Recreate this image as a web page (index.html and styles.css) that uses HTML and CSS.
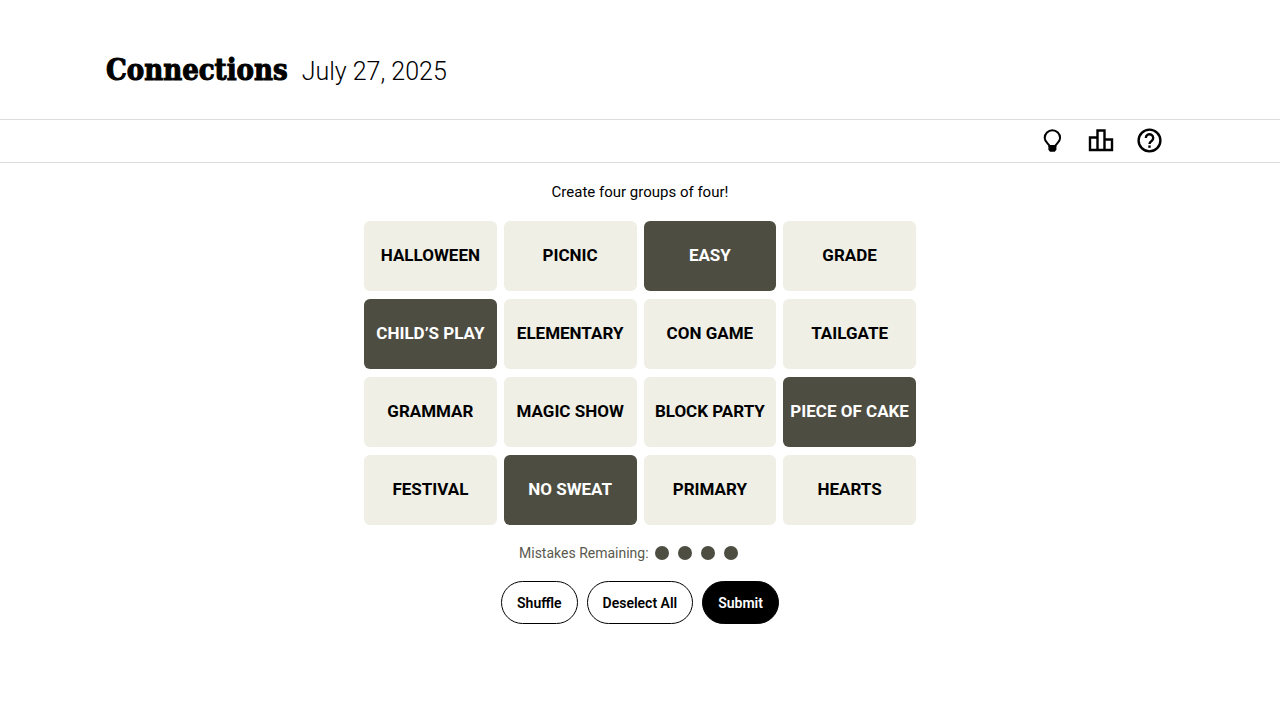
FILE: index.html
```html
<!DOCTYPE html>
<html lang="en">

<head>
    <meta charset="UTF-8">
    <meta name="viewport" content="width=device-width, initial-scale=1">
    <title>Connections</title>

    <link rel="stylesheet" href="styles.css">
</head>

<body>

    <header class="page-header">
        <div class="wrapper title-row">
            <h1>Connections</h1>
            <p class="date">July 27, 2025</p>
        </div>
    </header>

    <nav class="toolbar">
        <div class="wrapper tools">
            <button class="tool" type="button" aria-label="Hints">
                <svg width="26" height="26" viewBox="0 0 26 26">
                    <path d="M9.500 18C9.500 15.900 4.700 14.800 4.700 10a7.700 7.700 0 0 1 15.400 0c0 4.800-4.800 5.900-4.800 8z" fill="none" stroke="#000" stroke-width="2" />
                    <path d="M8.400 17.200h8v4.600l-1.600 2h-4.800l-1.600-2z" />
                </svg>
            </button>
            <button class="tool" type="button" aria-label="Statistics">
                <svg width="26" height="26" viewBox="0 0 26 26">
                    <path d="M2 9.500h7.500V22H2zM9.500 2.500h7V22h-7zM16.500 11.500H24V22h-7.500z" fill="none" stroke="#000" stroke-width="2.400" />
                </svg>
            </button>
            <button class="tool" type="button" aria-label="Help">
                <svg width="26" height="26" viewBox="0 0 26 26">
                    <circle cx="13.500" cy="12.500" r="10.900" fill="none" stroke="#000" stroke-width="2.400" />
                    <path d="M9.800 10a3.700 3.700 0 1 1 5.800 3c-1.500 1-2.100 1.600-2.100 3.100" fill="none" stroke="#000" stroke-width="2.400" />
                    <rect x="12.300" y="17.400" width="2.400" height="2.400" />
                </svg>
            </button>
        </div>
    </nav>

    <main class="game">
        <h2>Create four groups of four!</h2>

        <div class="board">
            <button class="card" type="button">HALLOWEEN</button>
            <button class="card" type="button">PICNIC</button>
            <button class="card selected" type="button" aria-pressed="true">EASY</button>
            <button class="card" type="button">GRADE</button>

            <button class="card selected" type="button" aria-pressed="true">CHILD’S PLAY</button>
            <button class="card" type="button">ELEMENTARY</button>
            <button class="card" type="button">CON GAME</button>
            <button class="card" type="button">TAILGATE</button>

            <button class="card" type="button">GRAMMAR</button>
            <button class="card" type="button">MAGIC SHOW</button>
            <button class="card" type="button">BLOCK PARTY</button>
            <button class="card selected" type="button" aria-pressed="true">PIECE OF CAKE</button>

            <button class="card" type="button">FESTIVAL</button>
            <button class="card selected" type="button" aria-pressed="true">NO SWEAT</button>
            <button class="card" type="button">PRIMARY</button>
            <button class="card" type="button">HEARTS</button>
        </div>

        <div class="mistakes">
            <p>Mistakes Remaining:</p>
            <div class="bubbles">
                <span class="bubble"></span>
                <span class="bubble"></span>
                <span class="bubble"></span>
                <span class="bubble"></span>
            </div>
        </div>

        <div class="actions">
            <button class="action" type="button">Shuffle</button>
            <button class="action" type="button">Deselect All</button>
            <button class="action submit" type="button">Submit</button>
        </div>
    </main>

    <script>
        document.querySelectorAll(".card").forEach(card => {
            card.addEventListener("click", () => {
                const on = card.classList.toggle("selected");
                card.setAttribute("aria-pressed", on);
            });
        });
    </script>

</body>

</html>
```
FILE: styles.css
```css
* {
    box-sizing: border-box;
}

body {
    margin: 0;
    background-color: #fff;
    color: #000;
    font-family: Roboto, "Liberation Sans", sans-serif;
}

h1,
h2,
p {
    margin: 0;
}

button {
    font-family: inherit;
    cursor: pointer;
}

.wrapper {
    max-width: 1068px;
    margin: 0 auto;
}

.page-header {
    padding: 46px 0 25px;
}

.title-row {
    display: flex;
    align-items: baseline;
    gap: 14px;
}

h1 {
    font-family: "DejaVu Serif Condensed", "DejaVu Serif", serif;
    font-stretch: condensed;
    font-size: 29px;
    font-weight: bold;
    line-height: 48px;
    -webkit-text-stroke: 1px #000;
}

.date {
    font-size: 25px;
    font-weight: 300;
}

.toolbar {
    border-top: 1px solid #dcdcdc;
    border-bottom: 1px solid #dcdcdc;
}

.tools {
    display: flex;
    justify-content: flex-end;
    gap: 22px;
    padding: 8px 12px 8px 0;
}

.tool {
    display: flex;
    padding: 0;
    border: none;
    background: none;
}

.game {
    display: flex;
    flex-direction: column;
    align-items: center;
    padding-top: 17px;
}

h2 {
    font-size: 15px;
    font-weight: normal;
    line-height: 24px;
}

.board {
    display: grid;
    grid-template-columns: repeat(4, 1fr);
    grid-auto-rows: 70px;
    gap: 8px 7px;
    width: 100%;
    max-width: 552px;
    margin-top: 17px;
}

.card {
    padding: 0 0 2px;
    border: none;
    border-radius: 6px;
    background-color: #efefe6;
    color: #000;
    font-size: 17px;
    font-weight: bold;
    white-space: nowrap;
}

.card.selected {
    background-color: #4e4d41;
    color: #fff;
}

.mistakes {
    display: flex;
    align-items: center;
    gap: 6px;
    width: 242px;
    margin-top: 18px;
    color: #5a594e;
    font-size: 14px;
    line-height: 20px;
}

.bubbles {
    display: flex;
    gap: 9px;
}

.bubble {
    width: 14px;
    height: 14px;
    border-radius: 50%;
    background-color: #4e4d41;
}

.actions {
    display: flex;
    gap: 9px;
    margin-top: 18px;
}

.action {
    height: 43px;
    padding: 0 15px;
    border: 1px solid #000;
    border-radius: 22px;
    background-color: #fff;
    color: #000;
    font-size: 14px;
    font-weight: 600;
}

.action.submit {
    background-color: #000;
    color: #fff;
}
```
